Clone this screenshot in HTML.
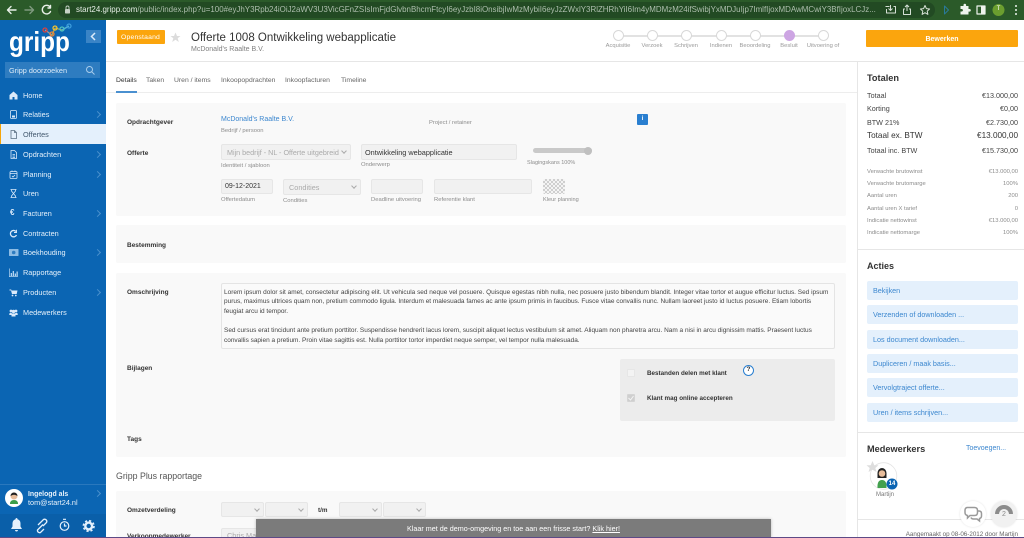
<!DOCTYPE html>
<html lang="nl">
<head>
<meta charset="utf-8">
<title>Offerte 1008</title>
<style>
html,body{margin:0;padding:0;width:1024px;height:538px;overflow:hidden;background:#fff;font-family:"Liberation Sans",sans-serif;color:#333}
#r{position:absolute;left:0;top:0;width:1024px;height:538px;overflow:hidden;background:#fff;filter:blur(.3px)}
.a,.t{position:absolute}
.t{white-space:nowrap;line-height:1.2}
.lb{font-size:6.5px;font-weight:bold;color:#333}
.sm{font-size:5.85px;color:#8c8c8c}
.sec{position:absolute;left:116px;width:730px;background:#f9f9f9;border-radius:2px}
.nav{position:absolute;left:23px;font-size:7.3px;color:#e6f1fb;white-space:nowrap;line-height:9px}
.ch{position:absolute;left:95px;width:4px;height:4px;border-top:1px solid #4a90cc;border-right:1px solid #4a90cc;transform:rotate(45deg)}
.ni{position:absolute;left:9px;width:9px;height:9px}
.in{position:absolute;background:#f1f1f1;border:1px solid #e6e6e6;border-radius:2px;box-sizing:border-box;white-space:nowrap;overflow:hidden}
.dd::after{content:"";position:absolute;right:4px;top:50%;width:3px;height:3px;margin-top:-3px;border-right:1px solid #aaa;border-bottom:1px solid #aaa;transform:rotate(45deg)}
.c{position:absolute;top:30px;width:11px;height:11px;box-sizing:border-box;border:1px solid #d8d8d8;border-radius:50%;background:#fff}
.cl{position:absolute;top:43px;font-size:5.8px;line-height:7px;color:#999;white-space:nowrap;transform:translateX(-50%)}
.row{position:absolute;left:867px;width:151px;font-size:7.2px;color:#444;line-height:9px}
.row b{font-weight:normal;position:absolute;right:0;top:0}
.r2{position:absolute;left:867px;width:151px;font-size:5.85px;color:#8c8c8c;line-height:7px}
.r2 b{font-weight:normal;position:absolute;right:0;top:0}
.btn{position:absolute;left:867px;width:151px;height:19px;background:#e4f0fc;border-radius:2px;color:#3c87cf;font-size:7.2px;line-height:19px;text-indent:6px}
.tab{position:absolute;top:76.5px;font-size:6.8px;color:#666;white-space:nowrap;line-height:8px}
</style>
</head>
<body>
<div id="r">

<!-- browser bar -->
<div class="a" style="left:0;top:0;width:1024px;height:20px;background:#2b5a29"></div>
<div class="a" style="left:58px;top:2px;width:877px;height:16px;background:#224a23;border-radius:8px"></div>
<svg class="a" style="left:0;top:0" width="72" height="20" fill="none" stroke-width="1.4" stroke-linecap="round" stroke-linejoin="round">
  <path d="M16 10H8M11 6.5L7.5 10L11 13.5" stroke="#e8efe8"/>
  <path d="M25 10H33M30 6.5L33.5 10L30 13.5" stroke="#7f9a7f"/>
  <path d="M50 7A4.3 4.3 0 1 0 50.5 11.5M50.5 5.5V8H48" stroke="#e8efe8"/>
  <rect x="65" y="9" width="5" height="4.5" rx=".8" fill="#c5d2c5" stroke="none"/>
  <path d="M66 9V7.5A1.5 1.5 0 0 1 69 7.5V9" stroke="#c5d2c5" stroke-width=".9"/>
</svg>
<div class="t" style="left:76px;top:5px;font-size:7.95px;line-height:10px;width:804px;overflow:hidden;color:#aebfae"><span style="color:#e6eee6">start24.gripp.com</span>/public/index.php?u=100#eyJhY3Rpb24iOiJ2aWV3U3VicGFnZSIsImFjdGlvbnBhcmFtcyI6eyJzbI8iOnsibjIwMzMybiI6eyJzZWxlY3RlZHRhYiI6Im4yMDMzM24ifSwibjYxMDJuIjp7ImlfIjoxMDAwMCwiY3BfIjoxLCJz...</div>
<svg class="a" style="left:880px;top:0" width="144" height="20" fill="none" stroke="#d5e0d5" stroke-width="1" stroke-linejoin="round">
  <path transform="translate(5 0)" d="M.5 6.5H4.5M8.500 6.5H10.5V13H1.5V9M5.500 5V10M3.5 8.5L5.5 10.5L7.5 8.5"/>
  <path d="M25 9H23.5V14.5H30.5V9H29M27 11V5M25 7L27 5L29 7"/>
  <path d="M45 5.5L46.4 8.6L49.6 9L47.2 11.1L47.9 14.4L45 12.7L42.1 14.4L42.8 11.1L40.4 9L43.6 8.6Z"/>
  <path d="M64.5 6V14L68.5 10Z" stroke="#2a7a9a"/>
  <path transform="translate(-3.5 0)" d="M84 6H87V5A1.3 1.3 0 0 1 89.6 5V6H92V9H93A1.3 1.3 0 0 1 93 11.6H92V14.5H84V11.5H85.5A1.3 1.3 0 0 0 85.5 9H84Z" fill="#eef3ee" stroke="none"/>
  <rect x="97" y="6" width="8" height="8" fill="none" stroke="#eef3ee" stroke-width="1.2"/>
  <rect x="101" y="6" width="4" height="8" fill="#eef3ee" stroke="none"/>
  <circle cx="118.5" cy="10" r="6" fill="#6b9e2f" stroke="none"/>
  <circle cx="136" cy="6" r="1" fill="#eef3ee" stroke="none"/>
  <circle cx="136" cy="10" r="1" fill="#eef3ee" stroke="none"/>
  <circle cx="136" cy="14" r="1" fill="#eef3ee" stroke="none"/>
</svg>
<div class="t" style="left:996px;top:6px;font-size:6px;color:#fff;width:5px;text-align:center">T</div>

<!-- sidebar -->
<div class="a" style="left:0;top:20px;width:106px;height:518px;background:#0b65b3"></div>
<div class="t" style="left:9px;top:27px;font-size:28px;font-weight:bold;color:#fff;line-height:30px;transform:scaleX(.87);transform-origin:left top">gripp</div>
<svg class="a" style="left:41px;top:23px" width="32" height="16" fill="none" stroke-width="1.3">
  <path d="M4 7L11 12" stroke="#999"/><path d="M11 12L14 5" stroke="#b8a24a"/><path d="M14 5L21 7" stroke="#9aa76a"/><path d="M21 7L28 3" stroke="#57b5d5"/>
  <circle cx="4" cy="7" r="2" stroke="#d9423f"/><circle cx="11" cy="11" r="2" stroke="#e8833a"/><circle cx="14" cy="5" r="2" stroke="#f2c230"/><circle cx="21" cy="6" r="2" stroke="#4cc0c0"/><circle cx="28" cy="3" r="2" stroke="#3c9cdc"/>
</svg>
<div class="a" style="left:86px;top:30px;width:15px;height:13px;background:#3a84c6"></div>
<svg class="a" style="left:86px;top:30px" width="15" height="13" fill="none"><path d="M9 3L5.5 6.5L9 10" stroke="#dbeafa" stroke-width="1.5"/></svg>
<div class="a" style="left:5px;top:62px;width:95px;height:16px;background:#2e7cc0"></div>
<div class="t" style="left:9px;top:66px;font-size:7.3px;line-height:9px;color:#dcebf8">Gripp doorzoeken</div>
<svg class="a" style="left:85px;top:65px" width="11" height="11" fill="none" stroke="#a9cdec" stroke-width="1"><circle cx="4.5" cy="4.5" r="3"/><path d="M6.8 6.8L9.5 9.5"/></svg>

<div class="a" style="left:0;top:124px;width:106px;height:20px;background:#e4f0fc"></div>
<div class="a" style="left:0;top:124px;width:1px;height:20px;background:#f5a50a"></div>

<svg class="ni" style="top:91px" viewBox="0 0 9 9" fill="#dbeafa"><path d="M4.5 .5L8.5 4V8.5H5.5V6H3.5V8.5H.5V4Z"/></svg>
<div class="nav" style="top:91px">Home</div>
<svg class="ni" style="top:110px" viewBox="0 0 9 9" fill="none" stroke="#dbeafa"><rect x="1.5" y=".5" width="6" height="8" rx="1" stroke-width=".8"/><rect x="3" y="5.5" width="3" height="2" fill="#dbeafa" stroke="none"/></svg>
<div class="nav" style="top:110px">Relaties</div><div class="ch" style="top:112px"></div>
<svg class="ni" style="top:130px" viewBox="0 0 9 9" fill="none" stroke="#5a6f83" stroke-width=".8"><path d="M2 .5H5.5L7.5 2.5V8.5H2ZM5.5 .5V2.5H7.5"/></svg>
<div class="nav" style="top:130px;color:#42586e">Offertes</div>
<svg class="ni" style="top:150px" viewBox="0 0 9 9" fill="none" stroke="#dbeafa" stroke-width=".8"><path d="M2 .5H5.5L7.5 2.5V8.5H2ZM3.5 4.5H6M3.5 6H6M3.5 7.5H6"/></svg>
<div class="nav" style="top:150px">Opdrachten</div><div class="ch" style="top:152px"></div>
<svg class="ni" style="top:170px" viewBox="0 0 9 9" fill="none" stroke="#dbeafa" stroke-width=".8"><rect x="1" y="1.5" width="7" height="7" rx="1"/><path d="M1 3.5H8M3 .5V2M6 .5V2M3 6L4 7L6 5"/></svg>
<div class="nav" style="top:170px">Planning</div><div class="ch" style="top:172px"></div>
<svg class="ni" style="top:189px" viewBox="0 0 9 9" fill="none" stroke="#dbeafa" stroke-width=".8"><path d="M1.5 .5H7.5M1.5 8.5H7.5M2.5 .5V2L6.5 7V8.5M6.5 .5V2L2.5 7V8.5"/></svg>
<div class="nav" style="top:189px">Uren</div>
<div class="t" style="left:10px;top:208px;font-size:8px;font-weight:bold;color:#dbeafa;line-height:10px">€</div>
<div class="nav" style="top:209px">Facturen</div><div class="ch" style="top:211px"></div>
<svg class="ni" style="top:229px" viewBox="0 0 9 9" fill="none" stroke="#dbeafa" stroke-width="1.3"><path d="M7 2.5A3.2 3.2 0 1 0 7.5 6"/><path d="M7.5 .8V3.5H5" stroke-width=".9"/></svg>
<div class="nav" style="top:229px">Contracten</div>
<svg class="a" style="left:9px;top:248px" width="10" height="9" viewBox="0 0 10 9"><rect x="0" y="1" width="9.5" height="7" rx=".5" fill="#8dbce4"/><circle cx="4.7" cy="4.5" r="1.8" fill="#2e7cc0"/></svg>
<div class="nav" style="top:248px">Boekhouding</div><div class="ch" style="top:250px"></div>
<svg class="ni" style="top:268px" viewBox="0 0 9 9" fill="#b5d5f0"><path d="M0 .5H.7V8.2H9V9H0ZM1.7 5H3V8H1.7ZM3.7 3H5V8H3.7ZM5.7 5.5H7V8H5.7ZM7.5 3.5H8.8V8H7.5Z"/></svg>
<div class="nav" style="top:268px">Rapportage</div>
<svg class="ni" style="top:288px" viewBox="0 0 9 9" fill="#dbeafa"><path d="M.5 1.5H2.2L2.5 2.5H8.5L7.7 6H3L2 2.5H.5Z"/><circle cx="3.5" cy="7.5" r=".9"/><circle cx="6.8" cy="7.5" r=".9"/></svg>
<div class="nav" style="top:288px">Producten</div><div class="ch" style="top:290px"></div>
<svg class="ni" style="top:308px" viewBox="0 0 9 9" fill="#dbeafa"><circle cx="2" cy="3" r="1.4"/><circle cx="7" cy="3" r="1.4"/><circle cx="4.5" cy="3.5" r="1.7"/><path d="M.3 7V5.5Q2 4 3 5.5H6Q7 4 8.7 5.5V7H6.5V8.5H2.5V7Z"/></svg>
<div class="nav" style="top:308px">Medewerkers</div>

<div class="a" style="left:0;top:484px;width:106px;height:1px;background:#2a78bd"></div>
<svg class="a" style="left:5px;top:489px" width="18" height="18" viewBox="0 0 18 18"><circle cx="9" cy="9" r="9" fill="#fff"/><circle cx="9" cy="7" r="3.5" fill="#e8bd9b"/><path d="M5.5 7A3.5 3.5 0 0 1 12.5 7Q9 4.500 5.5 7Z" fill="#222"/><path d="M5 15Q5 11 9 11Q13 11 13 15Z" fill="#3c9e4a"/></svg>
<div class="t" style="left:28px;top:489.5px;font-size:6.9px;line-height:9px;font-weight:bold;color:#e8f2fb">Ingelogd als</div>
<div class="t" style="left:28px;top:497.5px;font-size:7.3px;line-height:9px;color:#e8f2fb">tom@start24.nl</div>
<div class="ch" style="top:491px"></div>
<div class="a" style="left:0;top:514px;width:106px;height:24px;background:#0a5fa9"></div>
<svg class="a" style="left:0;top:514px" width="106" height="24" fill="#e4f0fc">
  <path d="M16.5 4Q17.5 4 17.5 5.2Q20.5 6 20.5 9.5V12.5L22 15H11L12.5 12.5V9.5Q12.5 6 15.5 5.2Q15.5 4 16.5 4ZM15 16H18Q17.8 17.5 16.5 17.5Q15.2 17.5 15 16Z"/>
  <g fill="none" stroke="#e4f0fc" stroke-width="1.3"><path d="M38 11L43.5 5.5A2.2 2.2 0 0 1 46.5 8.5L43 12M43 10.5L37.5 16A2.2 2.2 0 0 0 40.5 18.5L44 15"/></g>
  <g fill="none" stroke="#e4f0fc" stroke-width="1.2"><circle cx="64.5" cy="12" r="4.3"/><path d="M64.5 9.5V12H66.5M63 5.3H66"/></g>
  <g fill="none" stroke="#e4f0fc"><circle cx="88.7" cy="12" r="3.4" stroke-width="2.4"/><circle cx="88.7" cy="12" r="5.3" stroke-width="1.6" stroke-dasharray="2.2 2"/></g>
</svg>

<!-- header -->
<div class="a" style="left:117px;top:30px;width:48px;height:14px;background:#fba50d;border-radius:1px"></div>
<div class="t" style="left:121px;top:34px;font-size:6.8px;line-height:8px;color:#fff;letter-spacing:.2px">Openstaand</div>
<svg class="a" style="left:170px;top:32px" width="11" height="11" viewBox="0 0 11 11"><path d="M5.5 .5L7 4H10.5L7.7 6.3L8.8 10L5.5 7.8L2.2 10L3.3 6.3L.5 4H4Z" fill="#dcdcdc"/></svg>
<div class="t" style="left:191px;top:30px;font-size:11.5px;line-height:16px;color:#333">Offerte 1008 Ontwikkeling webapplicatie</div>
<div class="t" style="left:191px;top:45px;font-size:7px;line-height:9px;color:#808080">McDonald's Raalte B.V.</div>
<div class="a" style="left:106px;top:61px;width:918px;height:1px;background:#e6e6e6"></div>
<div class="a" style="left:106px;top:92px;width:751px;height:1px;background:#ededed"></div>
<div class="a" style="left:857px;top:62px;width:1px;height:476px;background:#e6e6e6"></div>

<!-- stepper -->
<div class="a" style="left:618px;top:35px;width:205px;height:1.5px;background:#e2e2e2"></div>
<div class="c" style="left:613px"></div><div class="c" style="left:647px"></div><div class="c" style="left:681px"></div><div class="c" style="left:716px"></div><div class="c" style="left:750px"></div>
<div class="c" style="left:784px;background:#cda5e3;border-color:#cda5e3"></div><div class="c" style="left:818px"></div>
<div class="cl" style="left:618px">Acquisitie</div><div class="cl" style="left:652px">Verzoek</div><div class="cl" style="left:686px">Schrijven</div><div class="cl" style="left:721px">Indienen</div><div class="cl" style="left:755px">Beoordeling</div><div class="cl" style="left:789px">Besluit</div><div class="cl" style="left:823px">Uitvoering of</div>
<div class="a" style="left:866px;top:30px;width:152px;height:16.5px;background:#fba50d;border-radius:1px"></div>
<div class="t" style="left:866px;top:35px;width:152px;text-align:center;font-size:7px;line-height:9px;font-weight:bold;color:#fff">Bewerken</div>

<!-- tabs -->
<div class="tab" style="left:116px;color:#333">Details</div><div class="a" style="left:116px;top:91px;width:21px;height:2px;background:#4a90d0"></div>
<div class="tab" style="left:146px">Taken</div><div class="tab" style="left:174px">Uren / items</div><div class="tab" style="left:221px">Inkoopopdrachten</div><div class="tab" style="left:285px">Inkoopfacturen</div><div class="tab" style="left:341px">Timeline</div>

<!-- sections -->
<div class="sec" style="top:103px;height:113px"></div>
<div class="sec" style="top:225px;height:38px"></div>
<div class="sec" style="top:273px;height:184px"></div>
<div class="sec" style="top:491px;height:47px"></div>

<div class="t lb" style="left:127px;top:119px">Opdrachtgever</div>
<div class="t" style="left:221px;top:116px;font-size:7px;color:#3c87cf">McDonald's Raalte B.V.</div>
<div class="t sm" style="left:221px;top:128px">Bedrijf / persoon</div>
<div class="t sm" style="left:429px;top:120px">Project / retainer</div>
<div class="a" style="left:637px;top:114px;width:11px;height:11px;background:#2a7fd0;border-radius:1px"></div>
<div class="t" style="left:637px;top:116px;width:11px;text-align:center;font-size:6px;font-weight:bold;color:#fff">i</div>

<div class="t lb" style="left:127px;top:150px">Offerte</div>
<div class="in dd" style="left:221px;top:144px;width:130px;height:16px;font-size:7.2px;line-height:15px;color:#aaa;text-indent:5px">Mijn bedrijf - NL - Offerte uitgebreid</div>
<div class="t sm" style="left:221px;top:163px">Identiteit / sjabloon</div>
<div class="in" style="left:361px;top:144px;width:156px;height:16px;font-size:7.3px;line-height:15px;color:#333;text-indent:3px">Ontwikkeling webapplicatie</div>
<div class="t sm" style="left:361px;top:162px">Onderwerp</div>
<div class="a" style="left:533px;top:148px;width:59px;height:5px;background:#c9c9c9;border-radius:2.5px"></div>
<div class="a" style="left:584px;top:146.5px;width:8px;height:8px;background:#c0c0c0;border-radius:50%"></div>
<div class="t sm" style="left:527px;top:160px;font-size:5.5px">Slagingskans 100%</div>

<div class="in" style="left:221px;top:179px;width:52px;height:15px;font-size:7px;line-height:14px;color:#333;text-indent:3px">09-12-2021</div>
<div class="t sm" style="left:221px;top:197px">Offertedatum</div>
<div class="in dd" style="left:283px;top:179px;width:78px;height:16px;font-size:7.3px;line-height:15px;color:#aaa;text-indent:5px">Condities</div>
<div class="t sm" style="left:283px;top:198px">Condities</div>
<div class="in" style="left:371px;top:179px;width:52px;height:15px"></div>
<div class="t sm" style="left:371px;top:197px">Deadline uitvoering</div>
<div class="in" style="left:434px;top:179px;width:98px;height:15px"></div>
<div class="t sm" style="left:434px;top:197px">Referentie klant</div>
<div class="a" style="left:543px;top:179px;width:22px;height:15px;border-radius:2px;background:repeating-conic-gradient(#cfcfcf 0 25%,#f4f4f4 0 50%) 0 0/4px 4px"></div>
<div class="t sm" style="left:543px;top:197px;font-size:5.6px">Kleur planning</div>

<div class="t lb" style="left:127px;top:242px">Bestemming</div>

<div class="t lb" style="left:127px;top:289px">Omschrijving</div>
<div class="a" style="left:221px;top:283px;width:614px;height:66px;box-sizing:border-box;background:#fafafa;border:1px solid #e4e4e4;border-radius:2px;padding:3.5px 2px;font-size:6.47px;line-height:9.65px;color:#444;overflow:hidden">
<div style="white-space:nowrap">Lorem ipsum dolor sit amet, consectetur adipiscing elit. Ut vehicula sed neque vel posuere. Quisque egestas nibh nulla, nec posuere justo bibendum blandit. Integer vitae tortor et augue efficitur luctus. Sed ipsum</div>
<div style="white-space:nowrap">purus, maximus ultrices quam non, pretium commodo ligula. Interdum et malesuada fames ac ante ipsum primis in faucibus. Fusce vitae convallis nunc. Nullam laoreet justo id luctus posuere. Etiam lobortis</div>
<div style="white-space:nowrap">feugiat arcu id tempor.</div>
<div style="height:9.65px"></div>
<div style="white-space:nowrap">Sed cursus erat tincidunt ante pretium porttitor. Suspendisse hendrerit lacus lorem, suscipit aliquet lectus vestibulum sit amet. Aliquam non pharetra arcu. Nam a nisi in arcu dignissim mattis. Praesent luctus</div>
<div style="white-space:nowrap">convallis sapien a pretium. Proin vitae sagittis est. Nulla porttitor tortor imperdiet neque semper, vel tempor nulla malesuada.</div>
</div>

<div class="t lb" style="left:127px;top:365px">Bijlagen</div>
<div class="a" style="left:620px;top:359px;width:215px;height:62px;background:#ececec;border-radius:2px"></div>
<div class="a" style="left:627px;top:369px;width:6px;height:6px;background:#f3f3f3;border:1px solid #e6e6e6;border-radius:1px"></div>
<div class="t lb" style="left:647px;top:370px;font-size:6.3px">Bestanden delen met klant</div>
<div class="a" style="left:743px;top:365px;width:9px;height:9px;border:1px solid #2a7fd0;border-radius:50%;background:#fff"></div>
<div class="t" style="left:743px;top:366px;width:11px;text-align:center;font-size:6.5px;font-weight:bold;color:#333">?</div>
<div class="a" style="left:627px;top:394px;width:6px;height:6px;background:#cfcfcf;border:1px solid #d4d4d4;border-radius:1px"></div>
<svg class="a" style="left:627px;top:394px" width="8" height="8" fill="none" stroke="#f4f4f4" stroke-width="1"><path d="M1.5 4L3.5 6L6.5 2"/></svg>
<div class="t lb" style="left:647px;top:395px;font-size:6.3px">Klant mag online accepteren</div>
<div class="t lb" style="left:127px;top:436px">Tags</div>

<div class="t" style="left:116px;top:469.5px;font-size:8.8px;line-height:12px;color:#555">Gripp Plus rapportage</div>
<div class="t lb" style="left:127px;top:507px">Omzetverdeling</div>
<div class="in dd" style="left:221px;top:502px;width:43px;height:15px"></div>
<div class="in dd" style="left:265px;top:502px;width:43px;height:15px"></div>
<div class="t lb" style="left:318px;top:507px;font-size:6.3px">t/m</div>
<div class="in dd" style="left:339px;top:502px;width:43px;height:15px"></div>
<div class="in dd" style="left:383px;top:502px;width:43px;height:15px"></div>
<div class="t lb" style="left:127px;top:533px">Verkoopmedewerker</div>
<div class="in dd" style="left:221px;top:528px;width:60px;height:15px;font-size:7.3px;line-height:14px;color:#aaa;text-indent:5px">Chris Markus</div>

<!-- demo bar -->
<div class="a" style="left:256px;top:519px;width:515px;height:19px;background:#7b7b7b;box-shadow:0 0 3px rgba(0,0,0,.25)"></div>
<div class="t" style="left:256px;top:524px;width:515px;text-align:center;font-size:7.2px;line-height:9px;color:#fff">Klaar met de demo-omgeving en toe aan een frisse start? <u>Klik hier!</u></div>

<!-- right panel -->
<div class="t" style="left:867px;top:72px;font-size:9.2px;line-height:12px;font-weight:bold;color:#333">Totalen</div>
<div class="row" style="top:90.5px">Totaal<b>€13.000,00</b></div>
<div class="row" style="top:104px">Korting<b>€0,00</b></div>
<div class="row" style="top:117.5px">BTW 21%<b>€2.730,00</b></div>
<div class="row" style="top:131px;font-size:8.2px;color:#333">Totaal ex. BTW<b>€13.000,00</b></div>
<div class="row" style="top:145.5px">Totaal inc. BTW<b>€15.730,00</b></div>
<div class="r2" style="top:169px">Verwachte brutowinst<b>€13.000,00</b></div>
<div class="r2" style="top:181px">Verwachte brutomarge<b>100%</b></div>
<div class="r2" style="top:193px">Aantal uren<b>200</b></div>
<div class="r2" style="top:206px">Aantal uren X tarief<b>0</b></div>
<div class="r2" style="top:218px">Indicatie nettowinst<b>€13.000,00</b></div>
<div class="r2" style="top:230px">Indicatie nettomarge<b>100%</b></div>
<div class="a" style="left:858px;top:249px;width:166px;height:1px;background:#e6e6e6"></div>
<div class="t" style="left:867px;top:260px;font-size:9px;line-height:12px;font-weight:bold;color:#333">Acties</div>
<div class="btn" style="top:281px">Bekijken</div>
<div class="btn" style="top:305px">Verzenden of downloaden ...</div>
<div class="btn" style="top:330px">Los document downloaden...</div>
<div class="btn" style="top:354px">Dupliceren / maak basis...</div>
<div class="btn" style="top:378px">Vervolgtraject offerte...</div>
<div class="btn" style="top:403px">Uren / items schrijven...</div>
<div class="a" style="left:858px;top:432px;width:166px;height:1px;background:#e6e6e6"></div>
<div class="t" style="left:867px;top:443px;font-size:9.2px;line-height:12px;font-weight:bold;color:#333">Medewerkers</div>
<div class="t" style="left:966px;top:444px;font-size:7px;line-height:9px;color:#3c87cf">Toevoegen...</div>
<svg class="a" style="left:866px;top:459px" width="34" height="31" viewBox="0 0 34 31">
  <circle cx="17.5" cy="17" r="13.3" fill="#fff" stroke="#e4e4e4" stroke-width=".8"/>
  <path d="M11.5 14A4.5 5 0 0 1 20.5 14V19H11.5Z" fill="#222"/>
  <circle cx="16" cy="14.5" r="3.3" fill="#e8bd9b"/>
  <path d="M11.5 29Q11 21 16 21Q21 21 20.5 29Z" fill="#43a04e"/>
  <path d="M6.5 2L8.3 6.3H12.5L9.3 9L10.5 13L6.5 10.7L2.5 13L3.7 9L.5 6.3H4.7Z" fill="#dedede"/>
  <circle cx="26" cy="25" r="5.5" fill="#0b65b3"/>
</svg>
<div class="t" style="left:886px;top:480px;width:12px;text-align:center;font-size:6px;line-height:8px;font-weight:bold;color:#fff">14</div>
<div class="t" style="left:876px;top:491.5px;font-size:6px;line-height:7px;color:#777">Martijn</div>
<div class="a" style="left:858px;top:519px;width:166px;height:1px;background:#e6e6e6"></div>
<div class="a" style="left:960px;top:501px;width:26px;height:26px;background:#fff;border-radius:50%;box-shadow:0 0 2px rgba(0,0,0,.12)"></div>
<svg class="a" style="left:960px;top:501px" width="26" height="26" fill="none" stroke="#9a9a9a" stroke-width="1.5"><path d="M7 6.5H14.5Q17.5 6.5 17.5 9.5V11.5Q17.5 14.5 14.5 14.5H10L7.5 17V14.5Q5 14 5 11.5V9.5Q5 7 7 6.5Z"/><path d="M17.5 10H19Q21.5 10 21.5 12.5V15Q21.5 17 19.5 17.5V20L17 18H13.5Q11.5 18 11 16.5"/></svg>
<div class="a" style="left:991px;top:501px;width:26px;height:26px;background:#f1f1f1;border-radius:50%;box-shadow:0 0 2px rgba(0,0,0,.12)"></div>
<svg class="a" style="left:991px;top:501px" width="26" height="26" fill="none" stroke="#8c8c8c" stroke-width="4"><path d="M6 13A7 7 0 0 1 20 13"/></svg>
<div class="t" style="left:991px;top:510px;width:26px;text-align:center;font-size:7px;line-height:9px;color:#888">2</div>
<div class="t" style="left:880px;top:530.5px;width:138px;text-align:right;font-size:6.25px;line-height:7px;color:#666">Aangemaakt op 08-06-2012 door Martijn</div>

<div class="a" style="left:0;top:537px;width:1024px;height:1px;background:#5d4a86"></div>
</div>
</body>
</html>
